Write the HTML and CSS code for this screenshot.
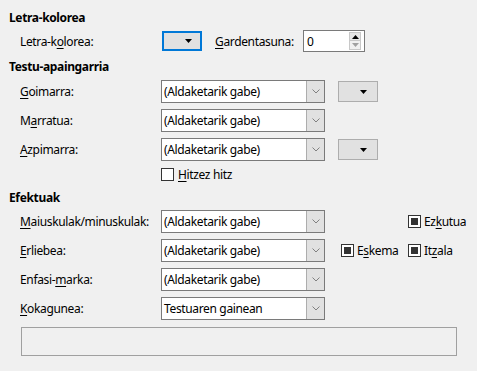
FILE: index.html
```html
<!DOCTYPE html>
<html lang="eu">
<head>
    <meta charset="UTF-8">
    <meta name="viewport" content="width=device-width, initial-scale=1.0">
    <title>Letra-efektuak</title>
    <link rel="stylesheet" href="styles.css">
</head>
<body>
    <div class="dialog">
        <!-- Font color -->
        <h3 class="heading">Letra-kolorea</h3>
        <div class="row row-color">
            <span class="label">Letra-k<u>o</u>lorea:</span>
            <div class="color-btn focused">
                <svg width="7" height="4" viewBox="0 0 7 4"><polygon points="0,0 7,0 3.5,4" fill="#000"/></svg>
            </div>
            <span class="label-trans"><u>G</u>ardentasuna:</span>
            <div class="spin">
                <span class="spin-value">0</span>
                <div class="spin-buttons">
                    <span class="spin-btn"><svg width="7" height="4" viewBox="0 0 7 4"><polygon points="0,4 7,4 3.5,0" fill="#000"/></svg></span>
                    <span class="spin-btn"><svg width="7" height="4" viewBox="0 0 7 4"><polygon points="0,0 7,0 3.5,4" fill="#a0a0a0"/></svg></span>
                </div>
            </div>
        </div>

        <!-- Text decoration -->
        <h3 class="heading heading-deco">Testu-apaingarria</h3>
        <div class="rows">
            <div class="row">
                <span class="label"><u>G</u>oimarra:</span>
                <div class="select">
                    <span class="select-text">(Aldaketarik gabe)</span>
                    <span class="select-arrow"><svg width="8" height="5" viewBox="0 0 8 5"><polyline points="0.5,0.5 4,4 7.5,0.5" fill="none" stroke="#808080" stroke-width="1"/></svg></span>
                </div>
                <div class="color-btn small">
                    <svg width="7" height="4" viewBox="0 0 7 4"><polygon points="0,0 7,0 3.5,4" fill="#000"/></svg>
                </div>
            </div>
            <div class="row">
                <span class="label">M<u>a</u>rratua:</span>
                <div class="select">
                    <span class="select-text">(Aldaketarik gabe)</span>
                    <span class="select-arrow"><svg width="8" height="5" viewBox="0 0 8 5"><polyline points="0.5,0.5 4,4 7.5,0.5" fill="none" stroke="#808080" stroke-width="1"/></svg></span>
                </div>
            </div>
            <div class="row">
                <span class="label"><u>A</u>zpimarra:</span>
                <div class="select">
                    <span class="select-text">(Aldaketarik gabe)</span>
                    <span class="select-arrow"><svg width="8" height="5" viewBox="0 0 8 5"><polyline points="0.5,0.5 4,4 7.5,0.5" fill="none" stroke="#808080" stroke-width="1"/></svg></span>
                </div>
                <div class="color-btn small">
                    <svg width="7" height="4" viewBox="0 0 7 4"><polygon points="0,0 7,0 3.5,4" fill="#000"/></svg>
                </div>
            </div>
            <div class="row row-check">
                <span class="label"></span>
                <span class="check"></span>
                <span class="check-text"><u>H</u>itzez hitz</span>
            </div>
        </div>

        <!-- Effects -->
        <h3 class="heading heading-fx">Efektuak</h3>
        <div class="rows">
            <div class="row">
                <span class="label"><u>M</u>aiuskulak/minuskulak:</span>
                <div class="select">
                    <span class="select-text">(Aldaketarik gabe)</span>
                    <span class="select-arrow"><svg width="8" height="5" viewBox="0 0 8 5"><polyline points="0.5,0.5 4,4 7.5,0.5" fill="none" stroke="#808080" stroke-width="1"/></svg></span>
                </div>
                <div class="cell-a"></div>
                <div class="cell-b">
                    <span class="check checked"></span>
                    <span class="check-text">Ez<u>k</u>utua</span>
                </div>
            </div>
            <div class="row">
                <span class="label"><u>E</u>rliebea:</span>
                <div class="select">
                    <span class="select-text">(Aldaketarik gabe)</span>
                    <span class="select-arrow"><svg width="8" height="5" viewBox="0 0 8 5"><polyline points="0.5,0.5 4,4 7.5,0.5" fill="none" stroke="#808080" stroke-width="1"/></svg></span>
                </div>
                <div class="cell-a">
                    <span class="check checked"></span>
                    <span class="check-text">E<u>s</u>kema</span>
                </div>
                <div class="cell-b">
                    <span class="check checked"></span>
                    <span class="check-text">It<u>z</u>ala</span>
                </div>
            </div>
            <div class="row">
                <span class="label">Enfasi-<u>m</u>arka:</span>
                <div class="select">
                    <span class="select-text">(Aldaketarik gabe)</span>
                    <span class="select-arrow"><svg width="8" height="5" viewBox="0 0 8 5"><polyline points="0.5,0.5 4,4 7.5,0.5" fill="none" stroke="#808080" stroke-width="1"/></svg></span>
                </div>
            </div>
            <div class="row">
                <span class="label"><u>K</u>okagunea:</span>
                <div class="select">
                    <span class="select-text">Testuaren gainean</span>
                    <span class="select-arrow"><svg width="8" height="5" viewBox="0 0 8 5"><polyline points="0.5,0.5 4,4 7.5,0.5" fill="none" stroke="#808080" stroke-width="1"/></svg></span>
                </div>
            </div>
        </div>

        <div class="preview"></div>
    </div>
</body>
</html>
```

FILE: styles.css
```css
body {
    margin: 0;
    background-color: #f0f0f0;
    color: #000;
    font-family: "Noto Sans", "Open Sans", sans-serif;
    font-size: 12px;
    letter-spacing: -0.35px;
}
.dialog {
    padding: 10px 0 0 9px;
}
.heading {
    margin: 0;
    font-size: 12px;
    font-weight: bold;
    line-height: 16px;
    height: 16px;
}
.heading-deco { margin-top: 7px; }
.heading-fx { margin-top: 9px; }
.row {
    display: flex;
    align-items: center;
    height: 23px;
    padding-left: 11px;
    margin-bottom: 6px;
    white-space: nowrap;
}
.row-color {
    height: 22px;
    margin-top: 4px;
    margin-bottom: 0;
}
.rows { margin-top: 5px; }
.heading-fx + .rows { margin-top: 4px; }
.label {
    width: 141px;
    flex: none;
}
u { text-underline-offset: 2px; }

/* color buttons */
.color-btn {
    box-sizing: border-box;
    width: 40px;
    display: flex;
    align-items: center;
    justify-content: flex-end;
    background-color: #e1e1e1;
    border: 1px solid #adadad;
    flex: none;
}
.color-btn.focused {
    height: 20px;
    margin-left: 1px;
    border: 2px solid #0078d7;
    padding-right: 8px;
}
.color-btn.small {
    height: 21px;
    margin-left: 13px;
    padding-right: 10px;
}
.label-trans {
    width: 88px;
    margin-left: 13px;
}

/* spin field */
.spin {
    box-sizing: border-box;
    width: 62px;
    height: 22px;
    border: 1px solid #7a7a7a;
    background-color: #fff;
    display: flex;
    align-items: center;
}
.spin-value {
    flex: 1;
    padding-left: 3px;
}
.spin-buttons {
    display: flex;
    flex-direction: column;
    height: 18px;
    margin-right: 3px;
}
.spin-btn {
    box-sizing: border-box;
    width: 12px;
    height: 9px;
    display: flex;
    align-items: center;
    justify-content: center;
    background-color: #e5e5e5;
    border: 1px solid #c8c8c8;
}
.spin-btn + .spin-btn {
    border-top: none;
    background-color: #f0f0f0;
}

/* dropdowns */
.select {
    box-sizing: border-box;
    width: 164px;
    height: 23px;
    border: 1px solid #7a7a7a;
    background-color: #fff;
    display: flex;
    flex: none;
}
.select-text {
    flex: 1;
    line-height: 21px;
    padding-left: 2px;
}
.select-arrow {
    width: 17px;
    display: flex;
    align-items: center;
    justify-content: center;
    background-color: #e1e1e1;
    border-left: 1px solid #adadad;
}

/* checkboxes */
.check {
    box-sizing: border-box;
    width: 13px;
    height: 13px;
    border: 1px solid #333;
    background-color: #fff;
    flex: none;
    display: flex;
    align-items: center;
    justify-content: center;
}
.check.checked::after {
    content: "";
    width: 7px;
    height: 7px;
    background-color: #333;
}
.check-text { margin-left: 3px; }
.row-check {
    height: 14px;
    margin-bottom: 0;
}
.row-check .check-text { margin-left: 4px; }
.cell-a {
    width: 83px;
    padding-left: 16px;
    box-sizing: border-box;
    display: flex;
    align-items: center;
    flex: none;
}
.cell-b {
    display: flex;
    align-items: center;
}

.preview {
    box-sizing: border-box;
    width: 436px;
    height: 29px;
    margin: 7px 0 0 12px;
    border: 1px solid #a0a0a0;
}
```
